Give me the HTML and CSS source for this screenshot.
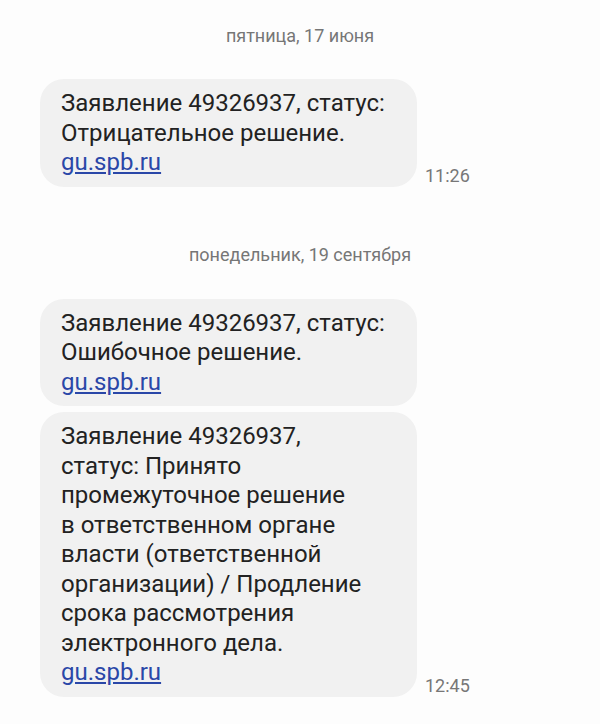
FILE: index.html
```html
<!DOCTYPE html>
<html lang="ru">
<head>
  <meta charset="UTF-8" />
  <meta name="viewport" content="width=device-width, initial-scale=1.0"/>
  <title>Сообщения</title>
  <link rel="stylesheet" href="styles.css">
</head>
<body>
  <div class="date first">пятница, 17 июня</div>

  <div class="row">
    <div class="bubble">
      Заявление 49326937, статус:<br>
      Отрицательное решение.<br>
      <a href="#">gu.spb.ru</a>
    </div>
    <div class="time">11:26</div>
  </div>

  <div class="date">понедельник, 19 сентября</div>

  <div class="row">
    <div class="bubble">
      Заявление 49326937, статус:<br>
      Ошибочное решение.<br>
      <a href="#">gu.spb.ru</a>
    </div>
  </div>

  <div class="row">
    <div class="bubble">
      Заявление 49326937,<br>
      статус: Принято<br>
      промежуточное решение<br>
      в ответственном органе<br>
      власти (ответственной<br>
      организации) / Продление<br>
      срока рассмотрения<br>
      электронного дела.<br>
      <a href="#">gu.spb.ru</a>
    </div>
    <div class="time">12:45</div>
  </div>
</body>
</html>
```

FILE: styles.css
```css
body {
  margin: 0;
  background: #fdfdfd;
  font-family: Roboto, "Noto Sans", sans-serif;
}

.date {
  text-align: center;
  font-size: 18px;
  color: #767676;
  line-height: 22px;
  padding: 51px 0 33px;
}

.date.first {
  padding-top: 25px;
  padding-bottom: 32px;
}

.row {
  display: flex;
  align-items: flex-end;
  margin: 0 0 6px 40px;
}

.bubble {
  width: 377px;
  box-sizing: border-box;
  padding: 10px 12px 9px 21px;
  background: #f1f1f1;
  border-radius: 24px;
  font-size: 24px;
  line-height: 29.5px;
  color: #222;
  white-space: nowrap;
}

.bubble a {
  color: #2a47a8;
}

.time {
  margin-left: 8px;
  margin-bottom: 1px;
  font-size: 18px;
  color: #777;
  line-height: 20px;
}
```
